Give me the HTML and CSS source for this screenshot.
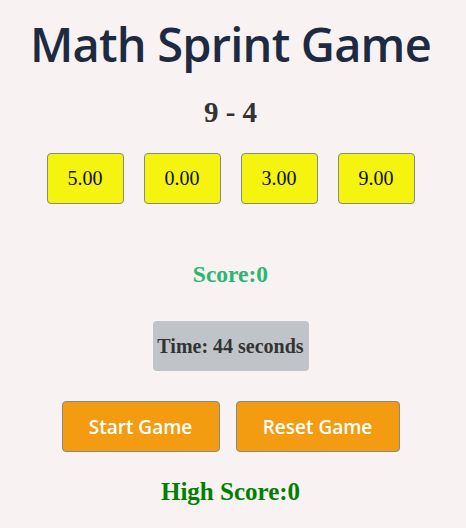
FILE: index.html
```html
<!DOCTYPE html>
<html>
<head>
<meta charset="utf-8">
<link rel="stylesheet" href="styles.css">
</head>
<body>
<div class="game">
  <h1 class="title">Math Sprint Game</h1>
  <div class="question">9 - 4</div>
  <div class="answers">
    <button class="answer">5.00</button>
    <button class="answer">0.00</button>
    <button class="answer">3.00</button>
    <button class="answer">9.00</button>
  </div>
  <div class="score">Score:0</div>
  <div class="timer">Time: 44 seconds</div>
  <div class="controls">
    <button class="control">Start Game</button>
    <button class="control">Reset Game</button>
  </div>
  <div class="high-score">High Score:0</div>
</div>
</body>
</html>
```
FILE: styles.css
```css
html, body {
  margin: 0;
  padding: 0;
  background: #f8f2f2;
}
.game {
  display: flex;
  flex-direction: column;
  align-items: center;
  padding-right: 5px;
  font-family: "Liberation Serif", serif;
}
.title {
  margin: 14px 0 0 0;
  font-family: "Open Sans", sans-serif;
  font-weight: 600;
  font-size: 47px;
  line-height: 60px;
  color: #1d2a41;
  letter-spacing: -0.8px;
}
.question {
  margin-top: 22px;
  font-weight: bold;
  font-size: 29px;
  line-height: 32px;
  color: #333;
}
.answers {
  display: flex;
  gap: 20px;
  margin-top: 25px;
}
.answer {
  width: 77px;
  height: 51px;
  background: #f4f40e;
  border: 1px solid #888;
  border-radius: 4px;
  font-family: "Liberation Serif", serif;
  font-size: 20px;
  color: #111;
  padding: 0;
}
.score {
  margin-top: 57px;
  font-weight: bold;
  font-size: 23.5px;
  line-height: 26px;
  color: #2ab673;
}
.timer {
  margin-top: 34px;
  width: 156px;
  height: 50px;
  display: flex;
  align-items: center;
  justify-content: center;
  background: #c0c4c8;
  border-radius: 4px;
  font-weight: bold;
  font-size: 20px;
  color: #333;
  white-space: nowrap;
}
.controls {
  display: flex;
  gap: 16px;
  margin-top: 30px;
}
.control {
  width: 158px;
  height: 51px;
  background: #f39c12;
  border: 1px solid #888;
  border-radius: 4px;
  font-family: "Open Sans", sans-serif;
  font-weight: 600;
  font-size: 19px;
  color: #fff;
  padding: 0;
}
.control:last-child {
  width: 164px;
}
.high-score {
  margin-top: 26px;
  font-weight: bold;
  font-size: 25px;
  line-height: 28px;
  color: #008000;
}
```
